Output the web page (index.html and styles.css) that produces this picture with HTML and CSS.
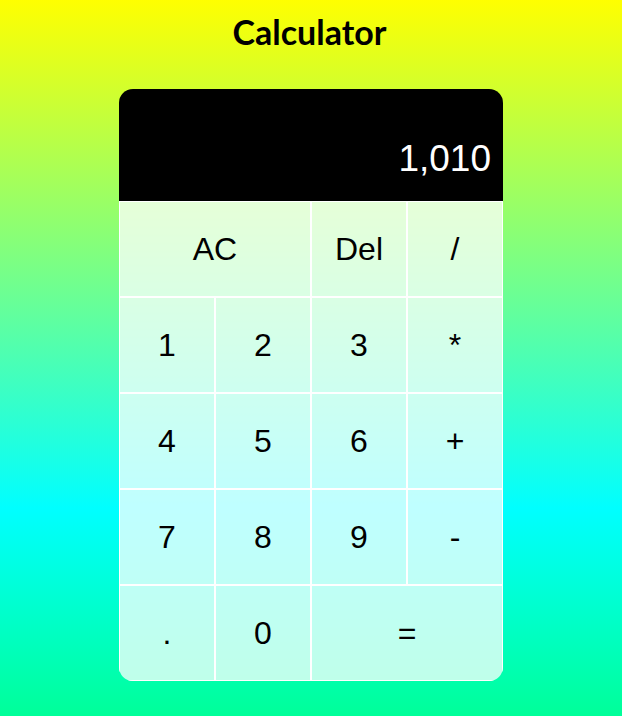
FILE: index.html
```html
<!DOCTYPE html>
<html lang="en">
<head>
<meta charset="utf-8">
<title>Calculator</title>
<link rel="stylesheet" href="styles.css">
</head>
<body>
<h1 class="title">Calculator</h1>
<div class="calculator">
  <div class="display">
    <div class="previous"></div>
    <div class="current">1,010</div>
  </div>
  <button class="key span-two">AC</button>
  <button class="key">Del</button>
  <button class="key">/</button>
  <button class="key">1</button>
  <button class="key">2</button>
  <button class="key">3</button>
  <button class="key">*</button>
  <button class="key">4</button>
  <button class="key">5</button>
  <button class="key">6</button>
  <button class="key">+</button>
  <button class="key">7</button>
  <button class="key">8</button>
  <button class="key">9</button>
  <button class="key">-</button>
  <button class="key">.</button>
  <button class="key">0</button>
  <button class="key span-two">=</button>
</div>
</body>
</html>
```
FILE: styles.css
```css
* {
  box-sizing: border-box;
}

html, body {
  margin: 0;
  min-height: 100%;
}

body {
  min-height: 716px;
  background: linear-gradient(to bottom, #ffff00 0%, #00ffff 71%, #00ff99 100%);
  font-family: "Liberation Sans", Arial, sans-serif;
  padding-top: 14px;
}

.title {
  margin: 0;
  padding-right: 3px;
  text-align: center;
  font-family: Lato, "Open Sans", sans-serif;
  font-weight: 700;
  font-size: 34px;
  line-height: 36px;
  color: #000;
}

.calculator {
  margin: 39px auto 0;
  width: 384px;
  display: grid;
  grid-template-columns: repeat(4, 96px);
  grid-template-rows: 112px repeat(5, 96px);
  border-radius: 14px;
  overflow: hidden;
}

.display {
  grid-column: 1 / -1;
  background: #000;
  display: flex;
  flex-direction: column;
  align-items: flex-end;
  justify-content: flex-end;
  padding: 0 12px 20px;
  color: #fff;
  word-break: break-all;
}

.previous {
  font-size: 24px;
  color: rgba(255, 255, 255, 0.75);
}

.current {
  font-size: 37px;
  line-height: 44px;
}

.key {
  margin: 0;
  padding: 0;
  font-family: "Liberation Sans", Arial, sans-serif;
  font-size: 32px;
  color: #000;
  border: 1px solid #fff;
  outline: none;
  background: rgba(255, 255, 255, 0.75);
  cursor: pointer;
}

.span-two {
  grid-column: span 2;
}
```
